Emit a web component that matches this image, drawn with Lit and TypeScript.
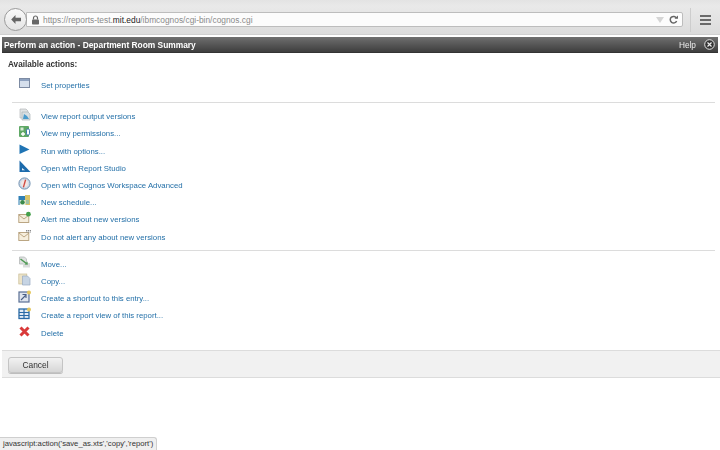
import { LitElement, html, css, svg } from "lit";
import { customElement } from "lit/decorators.js";

const icons: Record<string, unknown> = {
  props: svg`<rect x="1.5" y="1.5" width="10" height="9" fill="#d5dfec" stroke="#7d8ba3"/><rect x="2" y="2" width="9" height="2" fill="#8ea2c0"/>`,
  versions: svg`<path d="M2 1h6l2 2v7H2z" fill="#e1e3e4" stroke="#b5b8ba" stroke-width=".7"/><path d="M4 4h6l2 2v6H4z" fill="#d9dfe2" stroke="#adb4b8" stroke-width=".7"/><path d="M6 6l3 2 2 3H5z" fill="#4a9bcc"/>`,
  perms: svg`<rect x="1" y="1" width="10" height="11" rx="1" fill="#5fa866"/><rect x="2.5" y="2.5" width="3" height="3" fill="#d7ebd5"/><path d="M3 9h4M5 7v4" stroke="#fff" stroke-width="1.4"/><rect x="8.5" y="4" width="3" height="6" rx="1.200" fill="#fff" stroke="#2f6fa8" stroke-width=".9"/>`,
  run: svg`<path d="M1.5 1.5L11.5 6.5L1.5 11z" fill="#1f74b4"/>`,
  studio: svg`<path d="M1.5 .5L12.5 12H1.5z" fill="#1c6bac"/><path d="M4 8l3 2.2H4z" fill="#e5eff7"/>`,
  workspace: svg`<circle cx="6.5" cy="6.5" r="5.6" fill="#cfdbe8" stroke="#6f8faf"/><circle cx="6.5" cy="6.5" r="3.4" fill="#f1e6e4"/><path d="M7.6 2.6L5.4 10.4" stroke="#cf4a42" stroke-width="1.4"/>`,
  schedule: svg`<rect x=".5" y="2" width="8" height="9" fill="#2f7fb5"/><rect x="7" y="1" width="5" height="10" fill="#d9c46a"/><rect x="1.5" y="6" width="6" height="5" fill="#e6efe6"/><circle cx="4.5" cy="8.2" r="2.2" fill="#3b8a4b"/><rect x="8" y="6" width="3" height="4" fill="#9fc2a4"/>`,
  alert: svg`<rect x=".8" y="3.5" width="10" height="8" fill="#f6eedd" stroke="#b49e79" stroke-width=".9"/><path d="M1 4l5 4 5-4" fill="none" stroke="#b49e79" stroke-width=".9"/><circle cx="10.4" cy="3.2" r="2.4" fill="#45a04b"/>`,
  noalert: svg`<rect x=".8" y="3.5" width="10" height="8" fill="#f6eedd" stroke="#b49e79" stroke-width=".9"/><path d="M1 4l5 4 5-4" fill="none" stroke="#b49e79" stroke-width=".9"/><path d="M8 1.5h5M8 3h5" stroke="#8b8b8b" stroke-width="1.1" stroke-dasharray="1.4 .6"/>`,
  move: svg`<path d="M1.5 1h5l2 2v5h-7z" fill="#dfe1e1" stroke="#aeb2b2" stroke-width=".7"/><path d="M5 7h7v4.5H5z" fill="#dadcdc"/><path d="M2.5 3l6 4.5" stroke="#4f9a54" stroke-width="1.5"/><path d="M9.5 5.5l.3 3.3-3.3-.3z" fill="#4f9a54"/>`,
  copy: svg`<rect x=".8" y="1" width="8" height="10" fill="#ece3c8" stroke="#c9bc95" stroke-width=".7"/><path d="M4.5 3h5l2.5 2.5V12H4.500z" fill="#c6d4e4" stroke="#98abc2" stroke-width=".7"/>`,
  shortcut: svg`<rect x="1" y="2" width="10" height="10" fill="#dfe5ee" stroke="#5a6f94" stroke-width="1.200"/><path d="M3 10l4.500-4.500M4.500 4.500h3.500V8" fill="none" stroke="#4a6086" stroke-width="1.100"/><circle cx="11" cy="2.500" r="2" fill="#e4c65c"/>`,
  view: svg`<rect x="1" y="2" width="10" height="9.500" fill="#e3ebf4" stroke="#2a6aa5" stroke-width="1.300"/><path d="M1 5.500h10M6 2v9.500M1 8.500h10" stroke="#2a6aa5" stroke-width="1.200"/><circle cx="11" cy="2.500" r="2" fill="#e4c65c"/>`,
  del: svg`<path d="M2.500 2.500L10.500 10.500M10.500 2.500L2.500 10.500" stroke="#d93a3a" stroke-width="3"/>`,
};

const groups: [string, string][][] = [
  [["versions", "View report output versions"], ["perms", "View my permissions..."], ["run", "Run with options..."], ["studio", "Open with Report Studio"], ["workspace", "Open with Cognos Workspace Advanced"], ["schedule", "New schedule..."], ["alert", "Alert me about new versions"], ["noalert", "Do not alert any about new versions"]],
  [["move", "Move..."], ["copy", "Copy..."], ["shortcut", "Create a shortcut to this entry..."], ["view", "Create a report view of this report..."], ["del", "Delete"]],
];

@customElement("app-root")
export class AppRoot extends LitElement {
  static styles = css`
    :host { display: block; height: 450px; overflow: hidden; background: #fff; font-family: "Liberation Sans", Arial, sans-serif; }
    .soft { filter: blur(0.45px); position: relative; height: 450px; }
    .chrome { height: 35px; box-sizing: border-box; padding: 5px 0 0 4px; background: linear-gradient(#e3e3e3, #e9e9e9 18%, #dcdcdc); display: flex; align-items: center; border-bottom: 1px solid #d0d0d0; }
    .back { width: 23px; height: 23px; border-radius: 50%; box-sizing: border-box; border: 1px solid #9a9a9a; background: linear-gradient(#fafafa, #e4e4e4); display: flex; align-items: center; justify-content: center; position: relative; z-index: 1; flex: none; }
    .url { margin-left: -1px; width: 657px; height: 15px; flex: none; box-sizing: border-box; border: 1px solid #bdbdbd; border-radius: 0 2px 2px 0; background: #fcfcfc; display: flex; align-items: center; padding: 0 4px 0 4px; font-size: 8.4px; color: #8b8b8b; white-space: nowrap; }
    .url b { font-weight: 400; color: #222; }
    .lock { margin-right: 3px; flex: none; }
    .urltext { flex: 1; }
    .urlicons { display: flex; align-items: center; gap: 5px; }
    .sep { width: 1px; height: 24px; background: #cdcdcd; margin-left: 7px; flex: none; }
    .menu { margin-left: 9px; flex: none; display: flex; flex-direction: column; gap: 2px; }
    .menu i { display: block; width: 11px; height: 2px; background: #6a6a6a; }
    .head { margin: 2px 2px 0; height: 16px; box-sizing: border-box; background: linear-gradient(#6f6f6f, #3e3e3e); border-bottom: 1px solid #333; display: flex; align-items: center; padding: 0 3px 0 2px; color: #fff; font-size: 8.4px; }
    .title { flex: 1; font-weight: 700; }
    .help { font-size: 8.3px; color: #eee; margin-right: 8px; }
    .close { flex: none; display: block; }
    .body { padding: 7px 2px 0 0; }
    .label { margin-left: 8px; font-size: 8.2px; font-weight: 700; color: #333; line-height: 10px; height: 10px; }
    .rows { display: flex; flex-direction: column; }
    .row { height: 17.2px; display: flex; align-items: center; font-size: 7.8px; color: #2470a8; white-space: nowrap; }
    .row span { padding-top: 1px; }
    .ico { width: 13px; height: 13px; margin: -3px 10px 0 18px; flex: none; overflow: visible; }
    .first { margin-top: 6px; }
    .rule { height: 1px; background: #dcdcdc; margin: 0 3px 0 12px; }
    .rule.a { margin-top: 8.5px; margin-bottom: 5px; }
    .rule.b { margin-top: 4.5px; margin-bottom: 4.5px; }
    .foot { margin: 9px 0 0 2px; height: 28px; box-sizing: border-box; background: #f1f1f1; border-top: 1px solid #dcdcdc; border-bottom: 1px solid #dcdcdc; padding: 6px; }
    .btn { display: block; width: 55px; height: 16px; box-sizing: border-box; border: 1px solid #c4c4c4; border-radius: 3px; background: linear-gradient(#f2f2f2, #d6d6d6); color: #333; font: 8.4px "Liberation Sans", Arial, sans-serif; padding: 0; box-shadow: 0 1px 0 #bdbdbd; }
    .status { position: absolute; left: 0; bottom: 0; height: 13px; width: 157px; box-sizing: border-box; background: #efefef; border: 1px solid #cfcfcf; border-left: 0; border-bottom: 0; border-radius: 0 3px 0 0; padding-left: 3px; font-size: 7.7px; line-height: 12px; color: #333; white-space: nowrap; }
  `;

  private row(icon: string, text: string) {
    return html`<div class="row"><svg class="ico" viewBox="0 0 13 13">${icons[icon]}</svg><span>${text}</span></div>`;
  }

  render() {
    return html`
      <div class="soft">
        <div class="chrome">
          <div class="back"><svg width="12" height="11" viewBox="0 0 12 11"><path d="M5.500 1L1.200 5.500L5.500 10V7.200H11V3.800H5.500z" fill="#666"/></svg></div>
          <div class="url">
            <svg class="lock" width="9" height="10" viewBox="0 0 9 10"><path d="M2.500 4.500V3a2 2 0 014 0v1.500" fill="none" stroke="#666" stroke-width="1.200"/><rect x="1" y="4.500" width="7" height="5" rx=".8" fill="#666"/></svg>
            <span class="urltext">https://reports-test.<b>mit.edu</b>/ibmcognos/cgi-bin/cognos.cgi</span>
            <span class="urlicons">
              <svg width="8" height="6" viewBox="0 0 8 6"><path d="M0 0h8L4 6z" fill="#d5d5d5"/></svg>
              <svg width="9" height="9" viewBox="0 0 9 9"><path d="M7.500 3.200A3.300 3.300 0 107.600 6" fill="none" stroke="#666" stroke-width="1.500"/><path d="M5.500 3.800H9V.500z" fill="#666"/></svg>
            </span>
          </div>
          <div class="sep"></div>
          <div class="menu"><i></i><i></i><i></i></div>
        </div>
        <div class="head">
          <span class="title">Perform an action - Department Room Summary</span>
          <span class="help">Help</span>
          <svg class="close" width="11" height="11" viewBox="0 0 11 11"><circle cx="5.500" cy="5.500" r="4.800" fill="#333" stroke="#e5e5e5"/><path d="M3.500 3.500l4 4M7.500 3.500l-4 4" stroke="#eee" stroke-width="1.200"/></svg>
        </div>
        <div class="body">
          <div class="label">Available actions:</div>
          <div class="rows first">${this.row("props", "Set properties")}</div>
          <div class="rule a"></div>
          <div class="rows">${groups[0].map(([i, t]) => this.row(i, t))}</div>
          <div class="rule b"></div>
          <div class="rows">${groups[1].map(([i, t]) => this.row(i, t))}</div>
        </div>
        <div class="foot"><button class="btn">Cancel</button></div>
        <div class="status">javascript:action('save_as.xts','copy','report')</div>
      </div>
    `;
  }
}
